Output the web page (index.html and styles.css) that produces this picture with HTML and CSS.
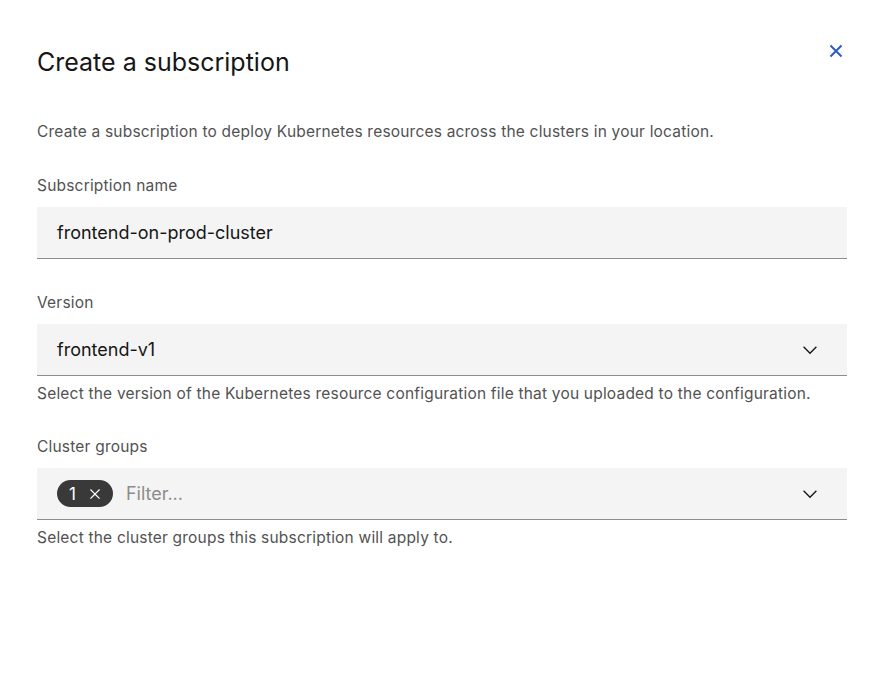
FILE: index.html
```html
<!DOCTYPE html>
<html lang="en">
<head>
<meta charset="utf-8">
<title>Create a subscription</title>
<link rel="stylesheet" href="styles.css">
</head>
<body>
<div class="modal">
  <header class="modal-header">
    <h2 class="modal-title">Create a subscription</h2>
    <button class="close-btn" aria-label="Close">
      <svg width="14" height="14" viewBox="0 0 14 14" aria-hidden="true"><path d="M1.5 1.5L12.5 12.5M12.5 1.5L1.5 12.5"/></svg>
    </button>
  </header>
  <p class="modal-desc">Create a subscription to deploy Kubernetes resources across the clusters in your location.</p>

  <div class="form-item">
    <label class="label">Subscription name</label>
    <div class="field"><span class="value">frontend-on-prod-cluster</span></div>
  </div>

  <div class="form-item">
    <label class="label">Version</label>
    <div class="field">
      <span class="value">frontend-v1</span>
      <svg class="chevron" width="22" height="22" viewBox="0 0 16 16" aria-hidden="true"><path d="M8 11L3 6 3.7 5.3 8 9.6 12.3 5.3 13 6z"/></svg>
    </div>
    <p class="helper">Select the version of the Kubernetes resource configuration file that you uploaded to the configuration.</p>
  </div>

  <div class="form-item form-item--after-helper">
    <label class="label">Cluster groups</label>
    <div class="field">
      <span class="tag">1
        <svg width="20" height="20" viewBox="0 0 16 16" aria-hidden="true"><path d="M12 4.7L11.3 4 8 7.3 4.7 4 4 4.7 7.3 8 4 11.3 4.7 12 8 8.7 11.3 12 12 11.3 8.7 8z"/></svg>
      </span>
      <span class="placeholder">Filter...</span>
      <svg class="chevron" width="22" height="22" viewBox="0 0 16 16" aria-hidden="true"><path d="M8 11L3 6 3.7 5.3 8 9.6 12.3 5.3 13 6z"/></svg>
    </div>
    <p class="helper">Select the cluster groups this subscription will apply to.</p>
  </div>
</div>
</body>
</html>
```
FILE: styles.css
```css
* { box-sizing: border-box; }
html, body { margin: 0; padding: 0; background: #ffffff; }
body {
  font-family: Inter, "Noto Sans", sans-serif;
  color: #161616;
}
.modal {
  padding: 27px 29px 0 37px;
}
.modal-header {
  display: flex;
  justify-content: space-between;
  align-items: flex-start;
}
.modal-title {
  margin: 19px 0 0;
  font-size: 25px;
  line-height: 32px;
  font-weight: 400;
  color: #161616;
}
.close-btn {
  width: 48px;
  height: 48px;
  margin-right: -13px;
  padding: 0;
  border: 0;
  background: transparent;
  display: flex;
  align-items: center;
  justify-content: center;
  stroke: #2c5cc5;
  stroke-width: 2;
  fill: none;
}
.modal-desc {
  margin: 44px 0 0;
  font-size: 15.5px;
  line-height: 20px;
  letter-spacing: 0.2px;
  color: #525252;
}
.form-item {
  margin-top: 34px;
  display: flex;
  flex-direction: column;
}
.form-item--after-helper { margin-top: 33px; }
.label {
  font-size: 15.5px;
  line-height: 20px;
  letter-spacing: 0.2px;
  color: #525252;
  margin-bottom: 11px;
}
.field {
  height: 52px;
  background: #f4f4f4;
  border-bottom: 1px solid #8d8d8d;
  display: flex;
  align-items: center;
  padding: 0 26px 0 20px;
  font-size: 18px;
  color: #161616;
}
.value { flex: 1; }
.chevron { fill: #161616; flex: none; }
.tag {
  display: inline-flex;
  align-items: center;
  height: 27px;
  padding: 0 8px 0 12px;
  border-radius: 14px;
  background: #393939;
  color: #ffffff;
  font-size: 17px;
  gap: 9px;
  fill: #ffffff;
}
.placeholder {
  flex: 1;
  margin-left: 13px;
  color: #8d8d8d;
}
.helper {
  margin: 8px 0 0;
  font-size: 15.5px;
  line-height: 20px;
  letter-spacing: 0.2px;
  color: #525252;
}
```
